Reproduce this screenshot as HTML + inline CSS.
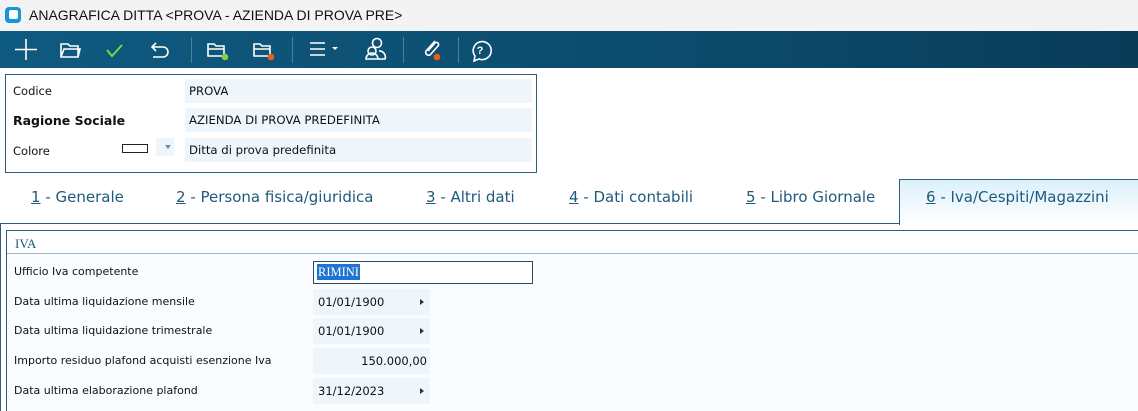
<!DOCTYPE html>
<html><head><meta charset="utf-8"><style>
*{margin:0;padding:0;box-sizing:border-box}
body{width:1138px;height:411px;overflow:hidden;background:#fff;font-family:"DejaVu Sans","Liberation Sans",sans-serif;position:relative;color:#111}
.abs{position:absolute}
.title{top:0;left:0;width:1138px;height:31px;background:#f3f3f3;font-family:"Liberation Sans",sans-serif;font-size:14px;line-height:31px;padding-left:29px;color:#111}
.logo{left:5px;top:7px;width:16px;height:16px;border-radius:4px;background:#1596d8}
.logo:after{content:"";position:absolute;left:4px;top:3px;width:9px;height:9px;border-radius:2px;background:#fff}
.tb{top:31px;left:0;width:1138px;height:37px;background:linear-gradient(90deg,#0f5a80,#0c4b6c 60%,#0a3c58)}
.sep{top:37px;width:1px;height:26px;background:#4d7f99}
.lbl{font-size:11.5px;font-family:"DejaVu Sans",sans-serif}
.fld{background:#eef6fb;font-size:11.7px;padding-left:4px;line-height:24px;height:24px}
.tab{top:188px;font-family:"DejaVu Sans",sans-serif;font-size:15px;color:#1e5a7c}
.tab u{text-decoration:underline}
.row{font-size:11px}
.dbox{background:#eef6fb;height:26px;line-height:26px;font-size:11.5px;padding-left:5px}
.arr{position:absolute;right:6px;top:10px;width:0;height:0;border-top:3.5px solid transparent;border-bottom:3.5px solid transparent;border-left:4px solid #333}
</style></head><body>
<div class="abs title">ANAGRAFICA DITTA &lt;PROVA - AZIENDA DI PROVA PRE&gt;</div>
<div class="abs logo"></div>
<div class="abs tb">
<svg width="520" height="37" style="position:absolute;left:0;top:0" fill="none" stroke="#fff" stroke-width="1.6">
<path d="M26 8v21M15 18.5h22"/>
<path d="M61 13h7l2 2h8v11H61z M61 26l3-8h16l-2 8"/>
<path d="M107 19l5 6 10-11" stroke="#7fd04a" stroke-width="2"/>
<path d="M156 12l-4 4 4 4M152 16h11a5 5 0 0 1 0 10h-10"/>
<path d="M208 13h6l2 2h8v10h-16z M208 18h16"/>
<circle cx="225" cy="26" r="3.3" fill="#7fd04a" stroke="none"/>
<path d="M254 13h6l2 2h8v10h-16z M254 18h16"/>
<circle cx="271" cy="26" r="3.3" fill="#f05a1e" stroke="none"/>
<path d="M310 12h15M310 18h15M310 24h15"/>
<path d="M332 16l3 3 3-3z" fill="#fff" stroke="none"/>
<circle cx="377" cy="12" r="4.5"/><circle cx="372" cy="20" r="4"/><path d="M366 28a6 6 0 0 1 12 0zM378 28h7a6 6 0 0 0-6-8"/>
<path d="M435 10l-9 10a3 3 0 0 0 4 4l8-9a2 2 0 0 0-3-3l-7 8"/>
<circle cx="437" cy="26" r="3.3" fill="#f05a1e" stroke="none"/>
<path d="M475 25a9 9 0 1 1 4 3l-5 2z"/>
<text x="480" y="23" fill="#fff" stroke="none" font-size="11" font-weight="bold" font-family="Liberation Sans" text-anchor="middle">?</text>
</svg>
<div class="abs sep" style="left:191px;top:6px"></div>
<div class="abs sep" style="left:292px;top:6px"></div>
<div class="abs sep" style="left:403px;top:6px"></div>
<div class="abs sep" style="left:458px;top:6px"></div>
</div>

<div class="abs" style="left:5px;top:74px;width:532px;height:99px;border:1px solid #2c5f7a"></div>
<div class="abs lbl" style="left:13px;top:84px">Codice</div>
<div class="abs lbl" style="left:13px;top:113px;font-weight:bold;font-size:12.5px">Ragione Sociale</div>
<div class="abs lbl" style="left:13px;top:144px">Colore</div>
<div class="abs fld" style="left:185px;top:79px;width:347px">PROVA</div>
<div class="abs fld" style="left:185px;top:108px;width:347px">AZIENDA DI PROVA PREDEFINITA</div>
<div class="abs fld" style="left:185px;top:138px;width:347px">Ditta di prova predefinita</div>
<div class="abs" style="left:122px;top:144px;width:26px;height:9px;border:1px solid #222"></div>
<div class="abs" style="left:156px;top:138px;width:18px;height:18px;background:#eef6fb"></div>
<div class="abs" style="left:165px;top:145px;width:0;height:0;border-left:3.5px solid transparent;border-right:3.5px solid transparent;border-top:4px solid #6a8aa0"></div>

<div class="abs" style="left:899px;top:179px;width:240px;height:46px;border:1px solid #2c5f7a;border-bottom:none;background:linear-gradient(#dcf0fb,#fff)"></div>
<div class="abs" style="left:0;top:223px;width:900px;height:1px;background:#2c5f7a"></div>
<div class="abs" style="left:0;top:223px;width:1px;height:188px;background:#2c5f7a"></div>
<div class="abs tab" style="left:31px"><u>1</u> - Generale</div>
<div class="abs tab" style="left:176px"><u>2</u> - Persona fisica/giuridica</div>
<div class="abs tab" style="left:426px"><u>3</u> - Altri dati</div>
<div class="abs tab" style="left:569px"><u>4</u> - Dati contabili</div>
<div class="abs tab" style="left:746px"><u>5</u> - Libro Giornale</div>
<div class="abs tab" style="left:926px"><u>6</u> - Iva/Cespiti/Magazzini</div>

<div class="abs" style="left:6px;top:230px;width:1132px;height:181px;border-left:1px solid #2c5f7a;border-top:1px solid #2c5f7a;background:#fafdff"></div>
<div class="abs" style="left:7px;top:231px;width:1131px;height:23px;border-bottom:1px solid #9db8c8;background:#fff"></div>
<div class="abs" style="left:15px;top:236px;font-family:'Liberation Serif',serif;font-size:13px;color:#1e5a7c">IVA</div>

<div class="abs row" style="left:14px;top:265px">Ufficio Iva competente</div>
<div class="abs row" style="left:14px;top:295px">Data ultima liquidazione mensile</div>
<div class="abs row" style="left:14px;top:324px">Data ultima liquidazione trimestrale</div>
<div class="abs row" style="left:14px;top:354px">Importo residuo plafond acquisti esenzione Iva</div>
<div class="abs row" style="left:14px;top:384px">Data ultima elaborazione plafond</div>

<div class="abs" style="left:313px;top:261px;width:220px;height:23px;border:1px solid #2c4b5e;background:#fff"></div>
<div class="abs" style="left:317px;top:264px;height:16px;line-height:16px;background:#1e74d0;color:#fff;font-family:'Liberation Serif',serif;font-size:12.5px;padding:0 1px">RIMINI</div>

<div class="abs dbox" style="left:313px;top:289px;width:117px">01/01/1900<span class="arr"></span></div>
<div class="abs dbox" style="left:313px;top:318px;width:117px">01/01/1900<span class="arr"></span></div>
<div class="abs dbox" style="left:313px;top:348px;width:117px;text-align:right;padding-right:3px">150.000,00</div>
<div class="abs dbox" style="left:313px;top:378px;width:117px">31/12/2023<span class="arr"></span></div>
</body></html>
